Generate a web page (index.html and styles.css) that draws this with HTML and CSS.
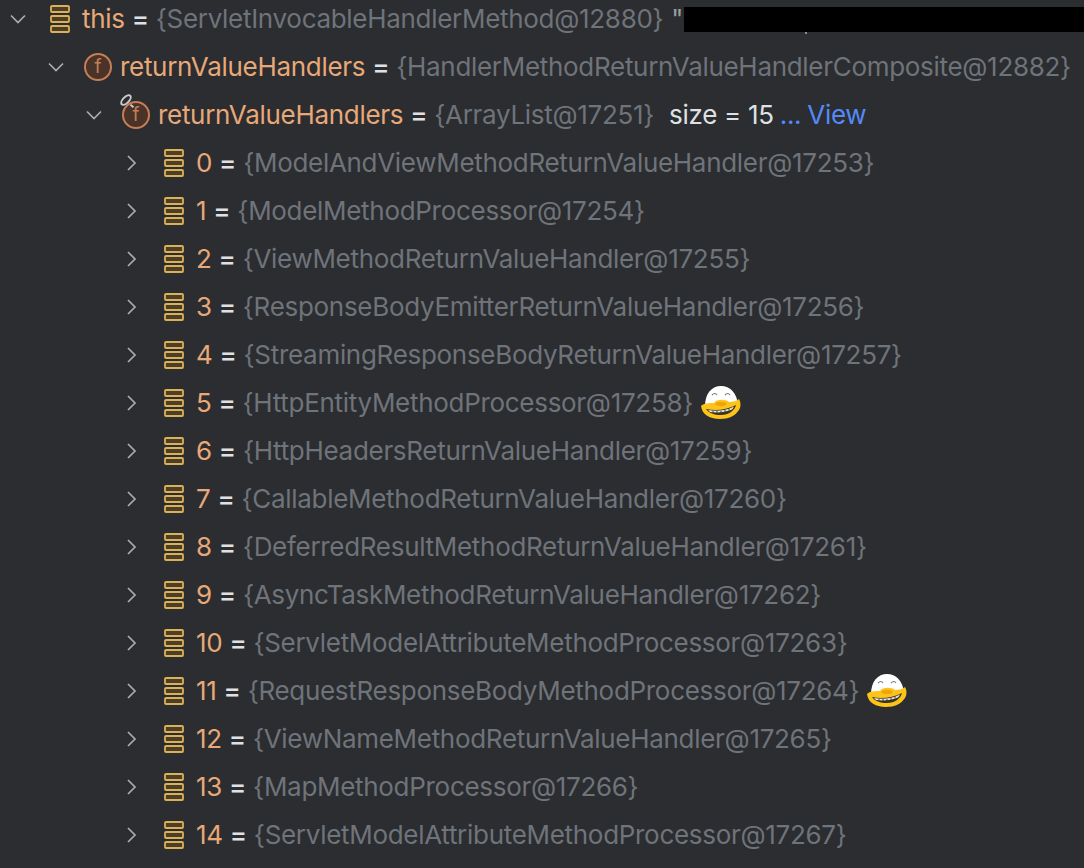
FILE: index.html
```html
<!DOCTYPE html>
<html lang="en">
<head>
<meta charset="utf-8">
<title>Debugger variables</title>
<link rel="stylesheet" href="styles.css">
</head>
<body>
<svg class="defs" width="0" height="0" aria-hidden="true">
  <defs>
    <symbol id="open" viewBox="0 0 16 16"><path d="M1 4.500 8 11.500 15 4.500" fill="none" stroke="#a9acb2" stroke-width="1.7"/></symbol>
    <symbol id="closed" viewBox="0 0 16 16"><path d="M4 1 11 8 4 15" fill="none" stroke="#a9acb2" stroke-width="1.7"/></symbol>
    <symbol id="stack" viewBox="0 0 20 28">
      <g fill="#4a3f2a" stroke="#dcb155" stroke-width="1.8">
        <rect x="1" y="1" width="18" height="6" rx="1"/>
        <rect x="1" y="11" width="18" height="6" rx="1"/>
        <rect x="1" y="21" width="18" height="6" rx="1"/>
      </g>
    </symbol>
    <symbol id="duck" viewBox="0 0 40 34">
      <path d="M4 20C4 7 11 0 20 0s16 7 17 19z" fill="#fff"/>
      <path d="M11 9q3-3 5 0M24 9q3-3 5 0" fill="none" stroke="#777" stroke-width="1.100"/>
      <path d="M0 20c3-3 8-3 13-3 2-4 12-4 15-1 4 0 8-1 10-3 2 3 2 8 0 11-4 6-10 9-19 9C8 33 1 28 0 20z" fill="#fcc419"/>
      <path d="M5 23c10 2 20 1 30-4-1 5-7 10-15 10-7 0-12-2-15-6z" fill="#3b3320"/>
      <path d="M7 24c8 1.500 18 1 26-3.500-.5 1-1 2-2 3-7 3-15 3.500-22 2.500z" fill="#e9e9e4"/>
      <path d="M12 24.500v2M16 25v2M20 25v2M24 24v2M28 22.500v2" stroke="#3b3320" stroke-width=".9"/>
      <path d="M14 18c2-3 10-3 12 0-2 3-10 3-12 0z" fill="#f0a312"/>
    </symbol>
  </defs>
</svg>
<main class="tree">
  <div class="row d0">
    <svg class="chev"><use href="#open"/></svg>
    <span class="slot"><svg class="stack"><use href="#stack"/></svg></span>
    <span class="name">this</span><span class="eq">=</span><span class="val">{ServletInvocableHandlerMethod@12880}</span><span class="quote">"</span>
    <span class="redact"></span><span class="tick"></span>
  </div>
  <div class="row d1">
    <svg class="chev"><use href="#open"/></svg>
    <span class="slot"><span class="field">f</span></span>
    <span class="name">returnValueHandlers</span><span class="eq">=</span><span class="val">{HandlerMethodReturnValueHandlerComposite@12882}</span>
  </div>
  <div class="row d2">
    <svg class="chev"><use href="#open"/></svg>
    <span class="slot"><span class="field">f</span><span class="watch"></span><span class="watch-tail"></span></span>
    <span class="name">returnValueHandlers</span><span class="eq">=</span><span class="val">{ArrayList@17251}</span><span class="size">size = 15</span><span class="link dots">...</span><span class="link">View</span>
  </div>
  <div class="row d3"><svg class="chev"><use href="#closed"/></svg><span class="slot"><svg class="stack"><use href="#stack"/></svg></span><span class="name">0</span><span class="eq">=</span><span class="val">{ModelAndViewMethodReturnValueHandler@17253}</span></div>
  <div class="row d3"><svg class="chev"><use href="#closed"/></svg><span class="slot"><svg class="stack"><use href="#stack"/></svg></span><span class="name">1</span><span class="eq">=</span><span class="val">{ModelMethodProcessor@17254}</span></div>
  <div class="row d3"><svg class="chev"><use href="#closed"/></svg><span class="slot"><svg class="stack"><use href="#stack"/></svg></span><span class="name">2</span><span class="eq">=</span><span class="val">{ViewMethodReturnValueHandler@17255}</span></div>
  <div class="row d3"><svg class="chev"><use href="#closed"/></svg><span class="slot"><svg class="stack"><use href="#stack"/></svg></span><span class="name">3</span><span class="eq">=</span><span class="val">{ResponseBodyEmitterReturnValueHandler@17256}</span></div>
  <div class="row d3"><svg class="chev"><use href="#closed"/></svg><span class="slot"><svg class="stack"><use href="#stack"/></svg></span><span class="name">4</span><span class="eq">=</span><span class="val">{StreamingResponseBodyReturnValueHandler@17257}</span></div>
  <div class="row d3"><svg class="chev"><use href="#closed"/></svg><span class="slot"><svg class="stack"><use href="#stack"/></svg></span><span class="name">5</span><span class="eq">=</span><span class="val">{HttpEntityMethodProcessor@17258}</span><svg class="duck"><use href="#duck"/></svg></div>
  <div class="row d3"><svg class="chev"><use href="#closed"/></svg><span class="slot"><svg class="stack"><use href="#stack"/></svg></span><span class="name">6</span><span class="eq">=</span><span class="val">{HttpHeadersReturnValueHandler@17259}</span></div>
  <div class="row d3"><svg class="chev"><use href="#closed"/></svg><span class="slot"><svg class="stack"><use href="#stack"/></svg></span><span class="name">7</span><span class="eq">=</span><span class="val">{CallableMethodReturnValueHandler@17260}</span></div>
  <div class="row d3"><svg class="chev"><use href="#closed"/></svg><span class="slot"><svg class="stack"><use href="#stack"/></svg></span><span class="name">8</span><span class="eq">=</span><span class="val">{DeferredResultMethodReturnValueHandler@17261}</span></div>
  <div class="row d3"><svg class="chev"><use href="#closed"/></svg><span class="slot"><svg class="stack"><use href="#stack"/></svg></span><span class="name">9</span><span class="eq">=</span><span class="val">{AsyncTaskMethodReturnValueHandler@17262}</span></div>
  <div class="row d3"><svg class="chev"><use href="#closed"/></svg><span class="slot"><svg class="stack"><use href="#stack"/></svg></span><span class="name">10</span><span class="eq">=</span><span class="val">{ServletModelAttributeMethodProcessor@17263}</span></div>
  <div class="row d3"><svg class="chev"><use href="#closed"/></svg><span class="slot"><svg class="stack"><use href="#stack"/></svg></span><span class="name">11</span><span class="eq">=</span><span class="val">{RequestResponseBodyMethodProcessor@17264}</span><svg class="duck"><use href="#duck"/></svg></div>
  <div class="row d3"><svg class="chev"><use href="#closed"/></svg><span class="slot"><svg class="stack"><use href="#stack"/></svg></span><span class="name">12</span><span class="eq">=</span><span class="val">{ViewNameMethodReturnValueHandler@17265}</span></div>
  <div class="row d3"><svg class="chev"><use href="#closed"/></svg><span class="slot"><svg class="stack"><use href="#stack"/></svg></span><span class="name">13</span><span class="eq">=</span><span class="val">{MapMethodProcessor@17266}</span></div>
  <div class="row d3"><svg class="chev"><use href="#closed"/></svg><span class="slot"><svg class="stack"><use href="#stack"/></svg></span><span class="name">14</span><span class="eq">=</span><span class="val">{ServletModelAttributeMethodProcessor@17267}</span></div>
</main>
</body>
</html>
```
FILE: styles.css
```css
html, body {
  margin: 0;
  height: 100%;
  overflow: hidden;
  background: #2b2d30;
}
.defs { position: absolute; }
.tree {
  margin-top: -5px;
  font-family: Inter, "Liberation Sans", sans-serif;
  font-size: 26px;
  letter-spacing: -0.3px;
  white-space: nowrap;
}
.row {
  display: flex;
  align-items: center;
  height: 48px;
  position: relative;
}
.d0 { padding-left: 10px; }
.d1 { padding-left: 48px; }
.d2 { padding-left: 86px; }
.d3 { padding-left: 124px; }
.chev { width: 16px; height: 16px; margin-right: 20px; flex: none; }
.slot {
  position: relative;
  width: 28px;
  height: 28px;
  margin-right: 8px;
  flex: none;
  display: flex;
  align-items: center;
  justify-content: center;
}
.stack { width: 20px; height: 28px; }
.field {
  box-sizing: border-box;
  width: 28px;
  height: 28px;
  border-radius: 50%;
  border: 2px solid #c77d55;
  background: #4a3328;
  color: #c77d55;
  font-family: Inter, "Liberation Sans", sans-serif;
  font-size: 19px;
  line-height: 23px;
  text-align: center;
  letter-spacing: 0;
}
.watch {
  position: absolute;
  left: -3px;
  top: -5px;
  width: 14px;
  height: 8px;
  border: 2px solid #c8ccd2;
  border-radius: 50%;
  box-sizing: border-box;
  transform: rotate(-45deg);
}
.watch-tail {
  position: absolute;
  left: 8px;
  top: 4px;
  width: 4px;
  height: 2px;
  background: #c8ccd2;
  transform: rotate(40deg);
}
.name, .eq, .val, .quote, .size, .link { margin-bottom: 2px; }
.name { color: #e8a878; }
.eq { color: #dfe1e5; margin-left: 7px; margin-right: 7px; font-weight: 500; }
.val { color: #6f737a; }
.quote { color: #9a9da3; margin-left: 8px; }
.size { color: #dfe1e5; margin-left: 15px; }
.link { color: #548af7; }
.dots { margin-left: 6px; margin-right: 6px; }
.duck { width: 40px; height: 34px; margin-left: 8px; flex: none; }
.redact {
  position: absolute;
  left: 684px;
  right: 0;
  top: 12px;
  height: 25px;
  margin-bottom: 0;
  background: #000;
}
.tick {
  position: absolute;
  left: 805px;
  top: 37px;
  width: 2px;
  height: 2px;
  background: #8b8e94;
}
```
